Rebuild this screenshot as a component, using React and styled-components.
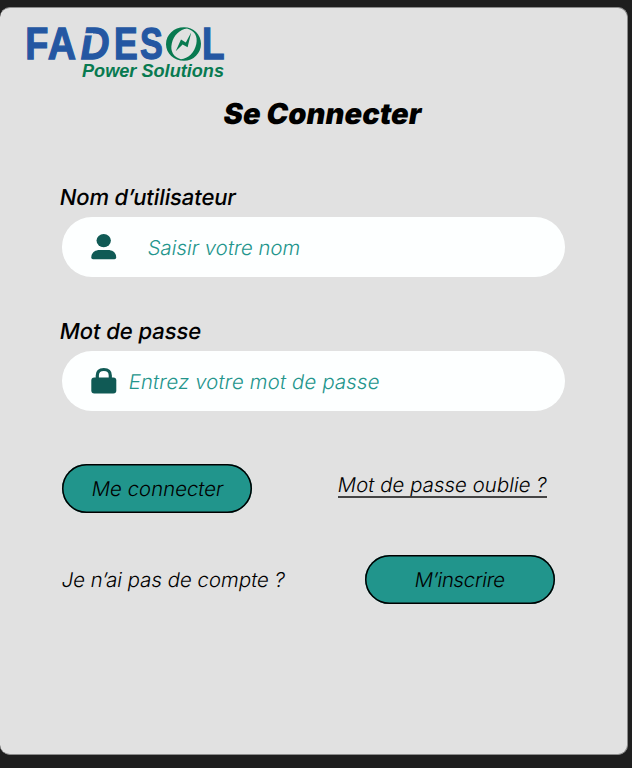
import React from "react";
import styled, { createGlobalStyle } from "styled-components";

const GlobalStyle = createGlobalStyle`
  * { box-sizing: border-box; }
  body {
    margin: 0;
    background: #1e1e1e;
    font-family: Inter, sans-serif;
    font-optical-sizing: none;
  }
`;

const Page = styled.div`
  height: 768px;
  padding-top: 7px;
  overflow: hidden;
  background: #1e1e1e;
`;

const Card = styled.main`
  width: 628px;
  height: 748px;
  padding: 18px 0 0;
  border: 1px solid #8b8b8b;
  border-left: 0;
  border-radius: 10px;
  background: #e1e1e1;
  color: #000;
`;

const Logo = styled.svg`
  display: block;
  width: 204px;
  height: 56px;
  margin-left: 24px;
  overflow: visible;
`;

const LogoLetter = styled.text`
  font: ${(p) => (p.$slanted ? "italic" : "normal")} 700 45px "Liberation Sans", sans-serif;
  fill: #2457a2;
  stroke: #2457a2;
  stroke-width: 1.3px;
`;

const Tagline = styled.text`
  font: italic 700 18px "Liberation Sans", sans-serif;
  fill: #087a50;
`;

/* Upright letterforms sheared to the slant of an oblique face. */
const Slanted = styled.span`
  display: inline-block;
  transform: skewX(-9.4deg);
  white-space: nowrap;
  letter-spacing: ${(p) => p.$tracking || 0}px;
`;

const Title = styled.h1`
  margin: 14px 0 0 224px;
  font-size: 29px;
  line-height: 36px;
  font-weight: 900;
`;

const Form = styled.form`
  display: flex;
  flex-direction: column;
  margin: 51px 0 0 60px;
`;

const Field = styled.div`
  height: 94px;
  margin-bottom: 40px;
`;

const Label = styled.label`
  display: block;
  height: 34px;
  line-height: 28px;
  font-size: 22px;
  font-weight: 480;
`;

const InputShell = styled.div`
  display: flex;
  align-items: center;
  width: 503px;
  height: 60px;
  margin-left: 2px;
  padding-left: 29px;
  border-radius: 30px;
  background: #fdffff;
`;

const FieldIcon = styled.svg`
  flex: none;
  width: 26px;
  height: 28px;
  fill: #105a55;
`;

const Input = styled.input`
  flex: 1;
  min-width: 0;
  height: 32px;
  margin-left: ${(p) => p.$gap}px;
  padding: 1px 0 0;
  border: 0;
  outline: 0;
  background: transparent;
  font: 300 20.4px Inter, sans-serif;
  font-optical-sizing: none;
  transform: skewX(-9.4deg);
  letter-spacing: ${(p) => p.$tracking || 0}px;
  &::placeholder { color: #23958c; opacity: 1; }
`;

const Actions = styled.div`
  display: flex;
  align-items: center;
  height: 49px;
  margin: ${(p) => p.$top}px 0 0 2px;
`;

const Button = styled.button`
  width: 190px;
  height: 49px;
  margin-left: ${(p) => p.$left || 0}px;
  padding: 0 0 1px ${(p) => p.$nudge || 0}px;
  border: 0;
  border-radius: 25px;
  box-shadow: inset 0 0 0 1.5px #000;
  background: #21958c;
  color: #000;
  font: 300 20.4px Inter, sans-serif;
  font-optical-sizing: none;
`;

const ForgotLink = styled.a`
  height: 26px;
  margin: 0 0 7px 86px;
  border-bottom: 2px solid #444;
  line-height: 26px;
  color: #000;
  font-size: 20.4px;
  font-weight: 300;
`;

const Prompt = styled.span`
  width: 224px;
  font-size: 20.4px;
  font-weight: 300;
`;

const logoLetters = [
  { char: "F", x: 25.2, scale: 0.84 },
  { char: "A", x: 47.8, scale: 0.87 },
  { char: "D", x: 80.8, scale: 0.88, slanted: true },
  { char: "E", x: 113.9, scale: 0.79 },
  { char: "S", x: 140, scale: 0.76 },
  { char: "L", x: 201.9, scale: 0.82 },
];

function FadesolLogo() {
  return (
    <Logo viewBox="24 26 204 56" aria-label="Fadesol Power Solutions">
      {logoLetters.map((l) => (
        <LogoLetter
          key={l.char}
          $slanted={l.slanted}
          transform={`translate(${l.x} 59.4) scale(${l.scale} 1)`}
        >
          {l.char}
        </LogoLetter>
      ))}
      <path d="M82 34.300H93" stroke="#e1e1e1" strokeWidth="2.200" />
      <path
        fill="#087a50"
        fillRule="evenodd"
        d="M184 27.3C174 27.3 166 34.8 166 44.2C166 53.4 174 60.8 184 60.8C193.500 60.8 201 53.300 201 43.800C201 34.600 193.500 27.300 184 27.300ZM187 28.600C194.500 30.500 198 36.500 196.300 44C194.500 52.500 188 58.800 181 59.200C173.500 57.500 170 51 171.800 43.500C173.600 35.500 180 29.300 187 28.600Z"
      />
      <path fill="#087a50" d="M191.200 32.600L187.600 47.200L182.600 44.500L175.700 51.300L181 39.600L185.800 42.600Z" />
      <Tagline x="82" y="76.600" textLength="142" lengthAdjust="spacingAndGlyphs">
        Power Solutions
      </Tagline>
    </Logo>
  );
}

export default function App() {
  return (
    <Page>
      <GlobalStyle />
      <Card>
        <FadesolLogo />
        <Title><Slanted $tracking={0.1}>Se Connecter</Slanted></Title>
        <Form onSubmit={(e) => e.preventDefault()}>
          <Field>
            <Label htmlFor="username"><Slanted $tracking={-0.1}>Nom d’utilisateur</Slanted></Label>
            <InputShell>
              <FieldIcon viewBox="0 0 26 28">
                <ellipse cx="12.700" cy="7.600" rx="7.200" ry="6.600" />
                <path d="M0.300 24.500C0.300 19.500 4.300 17 8.500 17H17C21.500 17 25.200 19.500 25.200 24.500Q25.200 26.300 23.500 26.300H2Q0.300 26.300 0.300 24.500Z" />
              </FieldIcon>
              <Input id="username" placeholder="Saisir votre nom" $gap={31} />
            </InputShell>
          </Field>
          <Field>
            <Label htmlFor="password"><Slanted $tracking={-0.05}>Mot de passe</Slanted></Label>
            <InputShell>
              <FieldIcon viewBox="0 0 26 28">
                <path d="M6.300 12V8.500C6.300 4.500 9 2.500 12.800 2.500S19.300 4.500 19.300 8.500V12" fill="none" stroke="#105a55" strokeWidth="3.200" />
                <rect x="0.300" y="10.600" width="25" height="15.800" rx="3" />
              </FieldIcon>
              <Input id="password" type="password" placeholder="Entrez votre mot de passe" $gap={12} $tracking={0.15} />
            </InputShell>
          </Field>
          <Actions $top={13}>
            <Button type="submit" $nudge={2}><Slanted>Me connecter</Slanted></Button>
            <ForgotLink><Slanted $tracking={0.04}>Mot de passe oublie ?</Slanted></ForgotLink>
          </Actions>
          <Actions $top={42}>
            <Prompt><Slanted>Je n’ai pas de compte ?</Slanted></Prompt>
            <Button type="button" $left={79}><Slanted $tracking={-0.3}>M’inscrire</Slanted></Button>
          </Actions>
        </Form>
      </Card>
    </Page>
  );
}
